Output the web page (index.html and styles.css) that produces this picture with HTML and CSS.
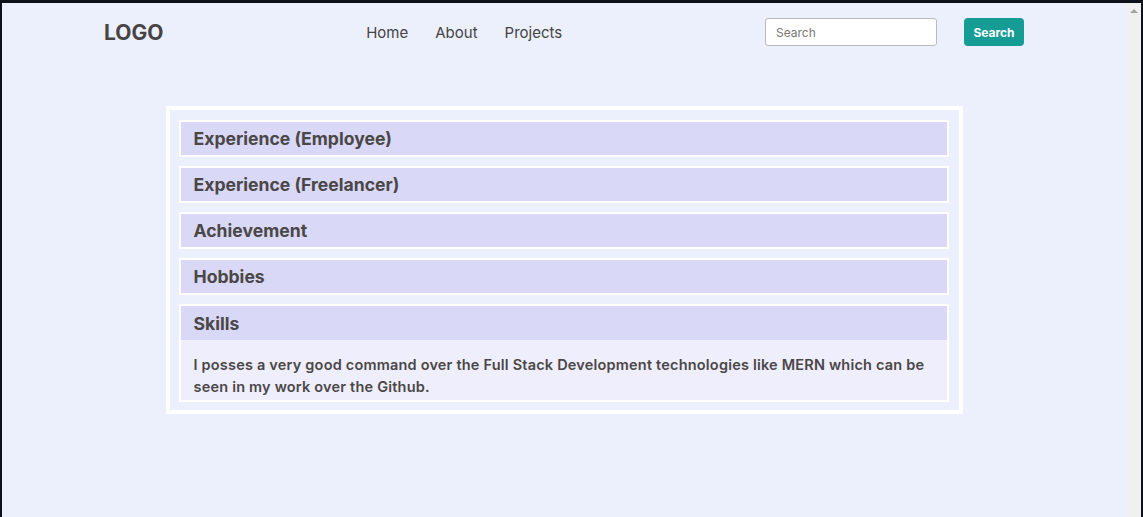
FILE: index.html
```html
<!DOCTYPE html>
<html lang="en">
<head>
<meta charset="utf-8">
<title>Portfolio</title>
<link rel="stylesheet" href="styles.css">
</head>
<body>
<div class="frame">
  <div class="main">
    <header class="navbar">
      <div class="logo">LOGO</div>
      <nav class="links">
        <a href="#">Home</a>
        <a href="#">About</a>
        <a href="#">Projects</a>
      </nav>
      <form class="search">
        <input type="text" placeholder="Search">
        <button type="button">Search</button>
      </form>
    </header>
    <section class="panel">
      <div class="item"><div class="item-head">Experience (Employee)</div></div>
      <div class="item"><div class="item-head">Experience (Freelancer)</div></div>
      <div class="item"><div class="item-head">Achievement</div></div>
      <div class="item"><div class="item-head">Hobbies</div></div>
      <div class="item open">
        <div class="item-head">Skills</div>
        <div class="item-body">I posses a very good command over the Full Stack Development technologies like MERN which can be seen in my work over the Github.</div>
      </div>
    </section>
  </div>
  <div class="scrollbar"><span class="arrow"></span></div>
</div>
</body>
</html>
```

FILE: styles.css
```css
* { box-sizing: border-box; }
html, body { margin: 0; padding: 0; height: 100%; overflow: hidden; }
body {
  font-family: "Inter", "Open Sans", sans-serif;
  color: #4a4747;
  background: #0d111a;
}
.frame {
  display: flex;
  height: 100vh;
  border-top: 3px solid #0d111a;
  border-left: 2px solid #0d111a;
  border-right: 2px solid #0d111a;
}
.main {
  flex: 1;
  background: #ecf0fc;
}
.scrollbar {
  width: 15px;
  background: #f0f0f0;
  display: flex;
  justify-content: center;
  padding-top: 6px;
}
.arrow {
  width: 0; height: 0;
  border-left: 4px solid transparent;
  border-right: 4px solid transparent;
  border-bottom: 4px solid #a3a3a3;
}
.navbar {
  height: 58px;
  padding: 0 102px;
  display: flex;
  align-items: center;
  justify-content: space-between;
}
.logo {
  font-size: 21px;
  font-weight: 700;
  color: #464444;
}
.links {
  display: flex;
  gap: 27px;
}
.links a {
  font-size: 15px;
  color: #454343;
  text-decoration: none;
}
.search {
  display: flex;
  align-items: center;
  gap: 27px;
  margin: 0;
}
.search input {
  width: 172px;
  height: 28px;
  border: 1px solid #b9b9bf;
  border-radius: 3px;
  padding: 0 10px;
  font-family: inherit;
  font-size: 12px;
  background: #fff;
  outline: none;
}
.search input::placeholder { color: #777; }
.search button {
  width: 60px;
  height: 28px;
  border: none;
  border-radius: 4px;
  background: #149c95;
  color: #fff;
  font-family: inherit;
  font-weight: 700;
  font-size: 12px;
}
.panel {
  width: 797px;
  margin: 45px auto 0;
  border: 4px solid #fff;
  padding: 10px 10px 8px 9px;
  display: flex;
  flex-direction: column;
  gap: 9px;
}
.item {
  border: 2px solid #fff;
}
.item-head {
  height: 33px;
  display: flex;
  align-items: center;
  padding: 0 13px;
  background: #d9d8f6;
  font-size: 17.6px;
  font-weight: 700;
}
.open .item-head { height: 34px; }
.item-body {
  background: #efeefc;
  padding: 14px 13px 2px;
  font-size: 14.5px;
  letter-spacing: 0.2px;
  font-weight: 600;
  line-height: 22px;
}
```
